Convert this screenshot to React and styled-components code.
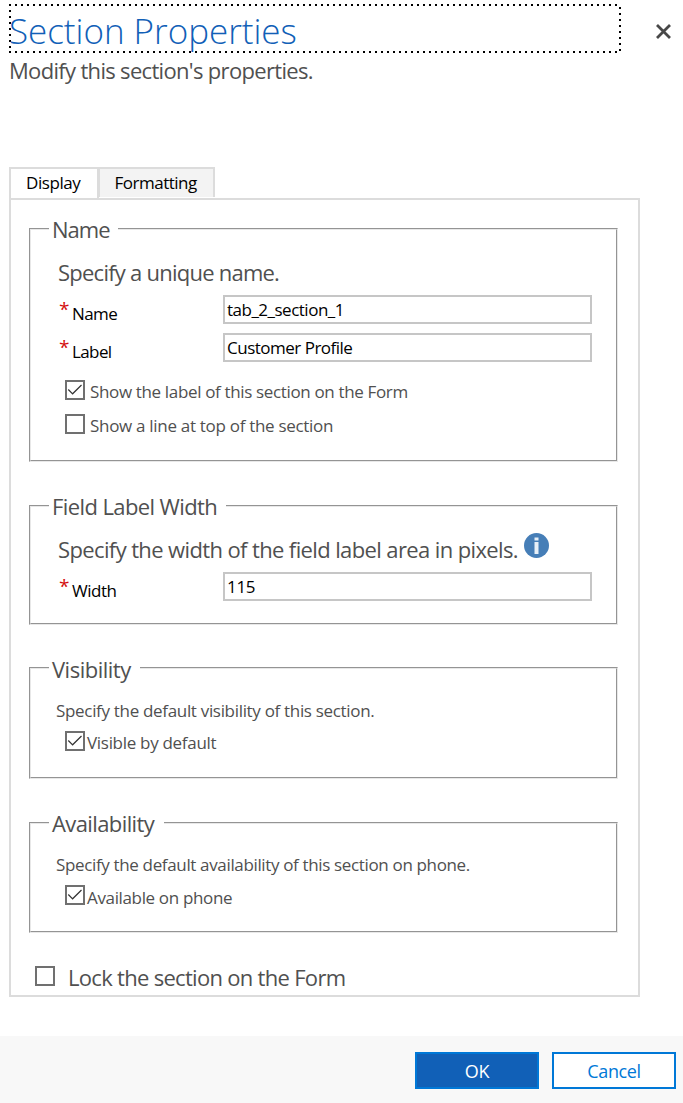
import React from "react";
import styled, { createGlobalStyle } from "styled-components";

const GlobalStyle = createGlobalStyle`
  * { box-sizing: border-box; }
  body {
    margin: 0;
    background: #fff;
    font-family: "Open Sans", "Noto Sans", sans-serif;
    color: #505050;
  }
`;

const Dialog = styled.div`
  display: flex;
  flex-direction: column;
  width: 683px;
  height: 1103px;
  overflow: hidden;
`;

const Header = styled.header`
  display: flex;
  justify-content: space-between;
  align-items: flex-start;
  padding: 4px 12px 0 9px;
`;

const dots = "#000 0 2px, transparent 2px 6px";

const TitleBox = styled.div`
  width: 612px;
  height: 49px;
  background:
    repeating-linear-gradient(90deg, ${dots}) 0 0 / 100% 2px no-repeat,
    repeating-linear-gradient(90deg, ${dots}) 0 100% / 100% 2px no-repeat,
    repeating-linear-gradient(180deg, ${dots}) 0 0 / 2px 100% no-repeat,
    repeating-linear-gradient(180deg, ${dots}) 100% 3px / 2px 100% no-repeat;
`;

const Title = styled.h1`
  margin: 0;
  font-size: 35px;
  font-weight: 340;
  line-height: 49px;
  padding-top: 2px;
  height: 49px;
  color: #1160b7;
  white-space: nowrap;
  letter-spacing: ${(p) => p.$ls || 0}px;
`;

const CloseButton = styled.button`
  width: 15px;
  height: 15px;
  margin-top: 20px;
  padding: 0;
  border: 0;
  background: none;
  svg { display: block; }
`;

const Text = styled.div`
  font-size: ${(p) => p.$size || 17}px;
  line-height: 30px;
  height: 30px;
  white-space: nowrap;
  letter-spacing: ${(p) => p.$ls || 0}px;
`;

const Subtitle = styled(Text)`
  margin: 2px 0 0 9px;
`;

const Tabs = styled.div`
  display: flex;
  margin: 82px 0 0 9px;
  height: 31px;
`;

const Tab = styled.div`
  width: ${(p) => p.$width}px;
  height: ${(p) => (p.$active ? 31 : 30)}px;
  padding-left: ${(p) => p.$pad}px;
  border: 2px solid #dcdcdc;
  border-bottom: 0;
  background: ${(p) => (p.$active ? "#fff" : "#f3f3f3")};
  margin-right: -1px;
  color: #000;
`;

const TabText = styled(Text)`
  height: 28px;
  line-height: 28px;
`;

const Panel = styled.main`
  width: 631px;
  height: 799px;
  margin-left: 9px;
  padding: 14px 20px 0 18px;
  border: 2px solid #dcdcdc;
`;

const Group = styled.fieldset`
  margin: 0 0 ${(p) => p.$gap}px;
  width: 589px;
  height: ${(p) => p.$height}px;
  padding: 0 0 0 18px;
  border: 2px groove #e8e8e8;
`;

const Legend = styled.legend`
  width: ${(p) => p.$width}px;
  height: 30px;
  padding: ${(p) => p.$top || 0}px 0 0 3px;
  font-size: 22px;
  line-height: 30px;
  white-space: nowrap;
  letter-spacing: ${(p) => p.$ls || 0}px;
`;

const Intro = styled(Text)`
  display: flex;
  margin: ${(p) => p.$margin};
`;

const InfoIcon = styled.svg`
  flex: none;
  width: 25px;
  height: 25px;
  margin: -1px 0 0 6px;
`;

const Field = styled.label`
  display: flex;
  height: 29px;
  margin-bottom: 9px;
  color: #000;
`;

const Required = styled.span`
  width: 13px;
  margin-left: 10px;
  font-size: 19px;
  font-weight: 500;
  line-height: 29px;
  color: #d40f0f;
`;

const FieldName = styled(Text)`
  width: 151px;
  padding-top: 4px;
`;

const Input = styled.input`
  width: 369px;
  height: 29px;
  padding: 0 2px;
  border: 2px solid #c6c6c6;
  background: #fff;
  color: #000;
  font: 17px "Open Sans", "Noto Sans", sans-serif;
  letter-spacing: ${(p) => p.$ls || 0}px;
  outline: 0;
`;

const CheckRow = styled.label`
  display: flex;
  height: 20px;
  margin: ${(p) => p.$margin};
  gap: ${(p) => p.$gap}px;
`;

const Box = styled.span`
  flex: none;
  width: 20px;
  height: 20px;
  border: 2px solid #707070;
  svg { display: block; }
`;

const CheckText = styled(Text)`
  margin-top: ${(p) => p.$top ?? -3}px;
`;

const Footer = styled.footer`
  display: flex;
  justify-content: flex-end;
  gap: 13px;
  margin-top: auto;
  height: 67px;
  padding: 16px 7px 0 0;
  background: #f8f8f8;
`;

const Button = styled.button`
  width: 124px;
  height: 37px;
  padding: 1px 0 0;
  border: 2px solid #0078d7;
  background: ${(p) => (p.$primary ? "#1160b7" : "#fff")};
  color: ${(p) => (p.$primary ? "#fff" : "#0078d7")};
  font: 18px "Open Sans", "Noto Sans", sans-serif;
  letter-spacing: ${(p) => p.$ls || 0}px;
`;

function Check({ checked, children, margin, gap, size, ls, top }) {
  return (
    <CheckRow $margin={margin} $gap={gap}>
      <Box>
        {checked && (
          <svg width="16" height="16" viewBox="0 0 16 16" fill="none" stroke="#333" strokeWidth="1.2">
            <path d="M1.3 7.5 5.6 11.8 14.5 3" />
          </svg>
        )}
      </Box>
      <CheckText $size={size} $ls={ls} $top={top}>{children}</CheckText>
    </CheckRow>
  );
}

function TextField({ name, value, ls, valueLs }) {
  return (
    <Field>
      <Required>*</Required>
      <FieldName $ls={ls}>{name}</FieldName>
      <Input defaultValue={value} $ls={valueLs} />
    </Field>
  );
}

export default function App() {
  return (
    <Dialog>
      <GlobalStyle />
      <Header>
        <TitleBox>
          <Title $ls={-0.03}>Section Properties</Title>
        </TitleBox>
        <CloseButton aria-label="Close">
          <svg width="15" height="15" viewBox="0 0 15 15" stroke="#484848" strokeWidth="2.8">
            <path d="M1 1 14 14M14 1 1 14" />
          </svg>
        </CloseButton>
      </Header>
      <Subtitle $size={22} $ls={-0.68}>Modify this section's properties.</Subtitle>
      <Tabs>
        <Tab $active $width={90} $pad={15}><TabText $ls={-0.42}>Display</TabText></Tab>
        <Tab $width={117} $pad={14.5}><TabText $ls={-0.5}>Formatting</TabText></Tab>
      </Tabs>
      <Panel>
        <Group $height={248} $gap={29}>
          <Legend $width={69} $ls={-1}>Name</Legend>
          <Intro $size={22} $ls={-0.76} $margin="13px 0 8px 9px">Specify a unique name.</Intro>
          <TextField name="Name" value="tab_2_section_1" ls={-0.6} valueLs={-0.5} />
          <TextField name="Label" value="Customer Profile" ls={-0.6} valueLs={-0.5} />
          <Check checked margin="18px 0 14px 16px" gap={5} ls={-0.35}>
            Show the label of this section on the Form
          </Check>
          <Check margin="0 0 0 16px" gap={5} ls={-0.3}>Show a line at top of the section</Check>
        </Group>
        <Group $height={134} $gap={28}>
          <Legend $width={177} $ls={-0.6}>Field Label Width</Legend>
          <Intro $size={22} $ls={-0.62} $margin="13px 0 8px 9px">
            Specify the width of the field label area in pixels.
            <InfoIcon viewBox="0 0 25 25">
              <circle cx="12.5" cy="12.5" r="12.5" fill="#467eb7" />
              <path d="M10.5 4.5h4v3h-4zM10.5 9h4v12h-4z" fill="#e7eff7" />
            </InfoIcon>
          </Intro>
          <TextField name="Width" value="115" ls={-0.5} valueLs={-0.3} />
        </Group>
        <Group $height={126} $gap={29}>
          <Legend $width={91} $top={1} $ls={-0.5}>Visibility</Legend>
          <Intro $ls={-0.32} $margin="13px 0 5px 7px">Specify the default visibility of this section.</Intro>
          <Check checked margin="0 0 0 16px" gap={2} ls={-0.3}>Visible by default</Check>
        </Group>
        <Group $height={125} $gap={33}>
          <Legend $width={115} $ls={-0.6}>Availability</Legend>
          <Intro $ls={-0.35} $margin="12px 0 5px 7px">Specify the default availability of this section on phone.</Intro>
          <Check checked margin="0 0 0 16px" gap={2} ls={-0.35} top={-2}>Available on phone</Check>
        </Group>
        <Check margin="0 0 0 6px" gap={13} size={22} ls={-0.7} top={-4}>Lock the section on the Form</Check>
      </Panel>
      <Footer>
        <Button $primary $ls={-0.3}>OK</Button>
        <Button $ls={-0.4}>Cancel</Button>
      </Footer>
    </Dialog>
  );
}
